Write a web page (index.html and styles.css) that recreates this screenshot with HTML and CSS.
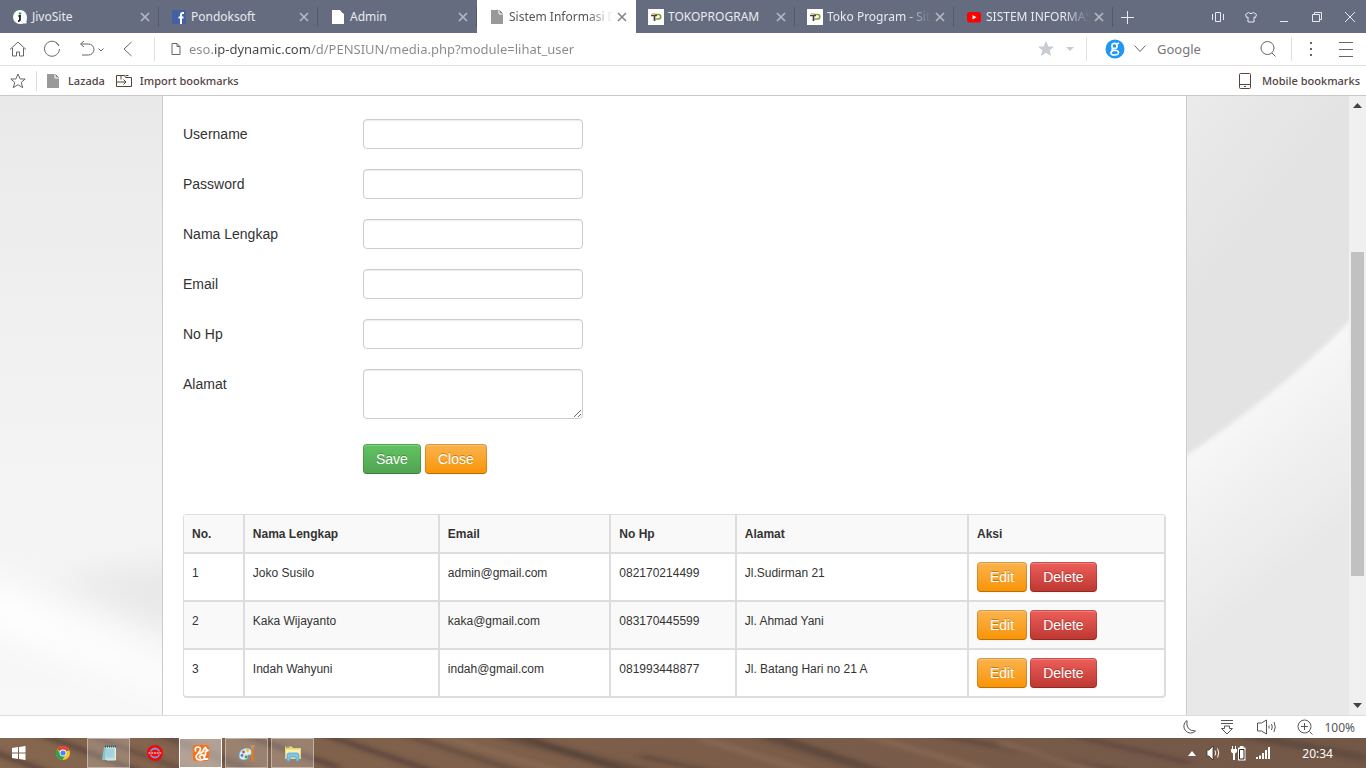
FILE: index.html
```html
<!DOCTYPE html>
<html lang="id">
<head>
<meta charset="utf-8">
<title>Sistem Informasi</title>
<link rel="stylesheet" href="styles.css">
</head>
<body>
<svg class="defs" width="0" height="0" aria-hidden="true">
  <symbol id="x" viewBox="0 0 10 10"><path d="M1 1l8 8M9 1L1 9" stroke="currentColor" stroke-width="1.7" fill="none"/></symbol>
  <symbol id="doc" viewBox="0 0 16 16"><path d="M2 1h8l4 4v10H2z" fill="currentColor"/><path d="M10 1v4h4" fill="none" stroke="#fff" stroke-width="1"/><path d="M10.500 1.500L13.500 4.500" stroke="#777" stroke-width="1"/></symbol>
  <symbol id="toko" viewBox="0 0 16 16"><path fill="#fff" d="M0 0h16v16H0z"/><path d="M7 5.500h3.500a2 2 0 0 1 0 4.500H7.500" stroke="#7fa52e" stroke-width="1.700" fill="none"/><path d="M3 6.500h6M6.500 6v6" stroke="#444" stroke-width="1.700" fill="none"/><path d="M4 4.800h3" stroke="#e8a33b"/></symbol>
</svg>

<header class="tabs">
  <div class="tab"><svg class="ico" viewBox="0 0 16 16"><path d="M8 8h6.500v6.500H8z" fill="#fff"/><circle cx="8" cy="8" r="7" fill="#fff"/><circle cx="8" cy="4.500" r="1.300" fill="#26b35a"/><path d="M6.500 7H8v3.500Q8 12 6 12" fill="none" stroke="#222" stroke-width="1.800"/></svg><span class="name">JivoSite</span><button class="close" aria-label="Tutup"><svg><use href="#x"/></svg></button></div>
  <div class="tab"><svg class="ico" viewBox="0 0 16 16"><path fill="#4460a5" d="M1 1h14v14H1z"/><path d="M13 4h-1.500Q10 4 10 5.500V15M7.500 8.500h5" stroke="#fff" stroke-width="2" fill="none"/></svg><span class="name">Pondoksoft</span><button class="close" aria-label="Tutup"><svg><use href="#x"/></svg></button></div>
  <div class="tab"><svg class="ico white"><use href="#doc"/></svg><span class="name">Admin</span><button class="close" aria-label="Tutup"><svg><use href="#x"/></svg></button></div>
  <div class="tab active"><svg class="ico grey"><use href="#doc"/></svg><span class="name fade">Sistem Informasi D</span><button class="close" aria-label="Tutup"><svg><use href="#x"/></svg></button></div>
  <div class="tab"><svg class="ico"><use href="#toko"/></svg><span class="name">TOKOPROGRAM</span><button class="close" aria-label="Tutup"><svg><use href="#x"/></svg></button></div>
  <div class="tab"><svg class="ico"><use href="#toko"/></svg><span class="name fade">Toko Program - Sit</span><button class="close" aria-label="Tutup"><svg><use href="#x"/></svg></button></div>
  <div class="tab"><svg class="ico" viewBox="0 0 16 16"><rect x="1" y="3" width="14" height="10.500" rx="2.500" fill="#f00"/><path d="M6.500 6v4.500L10.500 8.200z" fill="#fff"/></svg><span class="name fade">SISTEM INFORMAS</span><button class="close" aria-label="Tutup"><svg><use href="#x"/></svg></button></div>
  <button class="plus" aria-label="Tab baru"><svg width="14" height="14" viewBox="0 0 14 14"><path d="M7.500 1v13M1 7.500h13" stroke="currentColor"/></svg></button>
  <div class="win">
    <button aria-label="Panel"><svg viewBox="0 0 14 14"><path d="M4.500 2.500h5v9h-5zM1.500 4v6M12.500 4v6" /></svg></button>
    <button aria-label="Tema"><svg viewBox="0 0 14 14"><path d="M4.500 2.500L1.500 4.500l1 3 1.500-.5v5h6V7l1.500.5 1-3-3-2Q7 5 4.500 2.500z"/></svg></button>
    <button aria-label="Kecilkan"><svg viewBox="0 0 14 14"><path d="M3 11.500h8"/></svg></button>
    <button aria-label="Pulihkan"><svg viewBox="0 0 14 14"><path d="M2.500 4.500h7v7h-7zM4.500 4.500v-2h7v7h-2"/></svg></button>
    <button aria-label="Tutup jendela"><svg viewBox="0 0 14 14"><path d="M2 2l10 10M12 2L2 12"/></svg></button>
  </div>
</header>

<nav class="toolbar">
  <button class="tool w36" aria-label="Beranda"><svg width="18" height="18" viewBox="0 0 18 18"><path d="M1 9.500L9 2l8 7.500M3.500 8v8h4v-4h3v4h4V8"/></svg></button>
  <button class="tool w32" aria-label="Muat ulang"><svg width="18" height="18" viewBox="0 0 18 18"><path d="M15.500 5A7.500 7.500 0 1 0 16.500 9M13 2.500A7.500 7.500 0 0 1 16 6"/></svg></button>
  <button class="tool w48" aria-label="Urungkan"><svg width="28" height="18" viewBox="0 0 28 18"><path d="M3 4h7.500a5.500 5.500 0 0 1 0 11H4M6 1L2.500 4 6 7"/><path d="M20.500 8.500l2.500 2.500 2.500-2.500" /></svg></button>
  <button class="tool w24" aria-label="Kembali"><svg width="14" height="18" viewBox="0 0 14 18"><path d="M10.500 2L3 9l7.500 7"/></svg></button>
  <i class="rule first"></i>
  <label class="address"><svg width="10" height="12" viewBox="0 0 10 12"><path d="M1 .5h5l3 3v8H1zM6 .5v3h3"/></svg><input type="text" aria-label="Alamat situs" value="eso.ip-dynamic.com/d/PENSIUN/media.php?module=lihat_user"></label>
  <button class="tool w24 pale" aria-label="Favorit"><svg width="16" height="16" viewBox="0 0 16 16"><path d="M8 1l2 5h5l-4 3.200 1.500 5L8 11.200 3.500 14.200l1.500-5L1 6h5z" fill="currentColor"/></svg></button>
  <button class="tool w24 pale" aria-label="Pilihan favorit"><svg width="10" height="6" viewBox="0 0 10 6"><path d="M1 1h8L5 5z" fill="currentColor" stroke="none"/></svg></button>
  <i class="rule"></i>
  <label class="search">
    <svg width="20" height="20" viewBox="0 0 20 20"><circle cx="10" cy="10" r="9.500" fill="#2196f3" stroke="none"/><g stroke="#fff" stroke-width="1.600"><circle cx="9.500" cy="7" r="2.600"/><path d="M12 5l2-1M7.500 9.500Q6 11 9 11.300q4.500 0 4.500 2.200 0 2.500-4 2.500t-3.500-2.200q0-1.800 3-2.500"/></g></svg>
    <svg width="14" height="10" viewBox="0 0 14 10"><path d="M1.500 1.500L7 7.500l5.500-6"/></svg>
    <input type="text" aria-label="Cari" placeholder="Google">
    <svg width="18" height="18" viewBox="0 0 18 18"><circle cx="8.500" cy="8" r="6.500"/><path d="M13 13l3.500 3.500"/></svg>
  </label>
  <i class="rule"></i>
  <button class="tool w38" aria-label="Lainnya"><svg width="4" height="16" viewBox="0 0 4 16"><path d="M1 1h2v2H1zM1 7h2v2H1zM1 13h2v2H1z" fill="currentColor" stroke="none"/></svg></button>
  <button class="tool w32" aria-label="Menu"><svg width="16" height="16" viewBox="0 0 16 16"><path d="M1 1.500h14M1 8.500h14M1 15.500h14"/></svg></button>
</nav>

<nav class="bookmarks">
  <button class="tool w36" aria-label="Tambah bookmark"><svg width="18" height="18" viewBox="0 0 18 18"><path d="M9 2l2.200 5h5l-4 3.500 1.500 5.200L9 12.700l-4.700 3 1.500-5.200L1.800 7h5z"/></svg></button>
  <i class="short"></i>
  <a href="#"><svg class="ico grey"><use href="#doc"/></svg>Lazada</a>
  <a href="#"><svg width="18" height="14" viewBox="0 0 18 14"><path d="M6 5.500V1.500H1.500v11h15v-9h-6l-1-2H6M10.500 1.500h3M1.500 8H11M8.500 5.500L11 8l-2.500 2.500"/></svg>Import bookmarks</a>
  <a href="#" class="right"><svg width="14" height="18" viewBox="0 0 14 18"><rect x="1.500" y="1.500" width="11" height="15" rx="1"/><path d="M1.500 12.500h11M6 14.500h2"/></svg>Mobile bookmarks</a>
</nav>

<div class="viewport">
  <div class="page">
    <svg class="backdrop" viewBox="0 0 1349 619" preserveAspectRatio="none" aria-hidden="true">
      <defs>
        <linearGradient id="l" x1="0" y1="0" x2="0" y2="1"><stop offset="0" stop-color="#e9e9e9"/><stop offset=".35" stop-color="#f0f0f0"/><stop offset=".75" stop-color="#f5f5f5"/><stop offset="1" stop-color="#f8f8f8"/></linearGradient>
        <linearGradient id="r" gradientUnits="userSpaceOnUse" x1="1187" y1="0" x2="1290" y2="80"><stop offset="0" stop-color="#ebebeb"/><stop offset="1" stop-color="#e3e3e3"/></linearGradient>
        <linearGradient id="s" gradientUnits="userSpaceOnUse" x1="1230" y1="320" x2="1330" y2="440"><stop offset="0" stop-color="#f7f7f7"/><stop offset="1" stop-color="#e8e8e8"/></linearGradient>
        <filter id="b" x="-30%" y="-60%" width="160%" height="220%"><feGaussianBlur stdDeviation="16"/></filter>
        <filter id="e"><feGaussianBlur stdDeviation="2"/></filter>
      </defs>
      <path d="M0 0h675v619H0z" fill="url(#l)"/>
      <path d="M50 480L220 460V560z" fill="#e8e8e8" filter="url(#b)"/>
      <path d="M-20 480L200 590v15L-20 530z" fill="#fff" filter="url(#b)"/>
      <path d="M675 0h674v619H675z" fill="url(#r)"/>
      <path d="M1150 384L1187 359Q1290 290 1370 204V650H1150z" fill="url(#s)" filter="url(#e)"/>
    </svg>
    <main class="container">
      <form>
        <div class="field"><label for="u">Username</label><input id="u" type="text"></div>
        <div class="field"><label for="p">Password</label><input id="p" type="password"></div>
        <div class="field"><label for="n">Nama Lengkap</label><input id="n" type="text"></div>
        <div class="field"><label for="e1">Email</label><input id="e1" type="text"></div>
        <div class="field"><label for="h">No Hp</label><input id="h" type="text"></div>
        <div class="field"><label for="a">Alamat</label><textarea id="a"></textarea></div>
        <div class="actions"><button type="button" class="btn green">Save</button><button type="button" class="btn orange">Close</button></div>
      </form>
      <table>
        <colgroup><col class="c1"><col class="c2"><col class="c3"><col class="c4"><col class="c5"><col class="c6"></colgroup>
        <thead><tr><th>No.</th><th>Nama Lengkap</th><th>Email</th><th>No Hp</th><th>Alamat</th><th>Aksi</th></tr></thead>
        <tbody>
          <tr><td>1</td><td>Joko Susilo</td><td>admin@gmail.com</td><td>082170214499</td><td>Jl.Sudirman 21</td><td><div class="pair"><button class="btn orange">Edit</button><button class="btn red">Delete</button></div></td></tr>
          <tr><td>2</td><td>Kaka Wijayanto</td><td>kaka@gmail.com</td><td>083170445599</td><td>Jl. Ahmad Yani</td><td><div class="pair"><button class="btn orange">Edit</button><button class="btn red">Delete</button></div></td></tr>
          <tr><td>3</td><td>Indah Wahyuni</td><td>indah@gmail.com</td><td>081993448877</td><td>Jl. Batang Hari no 21 A</td><td><div class="pair"><button class="btn orange">Edit</button><button class="btn red">Delete</button></div></td></tr>
        </tbody>
      </table>
    </main>
  </div>
  <div class="scroll">
    <svg width="9" height="5" viewBox="0 0 9 5"><path d="M0 5h9L4.500 0z"/></svg>
    <div class="track"><div class="thumb"></div></div>
    <svg width="9" height="5" viewBox="0 0 9 5"><path d="M0 0h9L4.500 5z"/></svg>
  </div>
</div>

<div class="status">
  <button aria-label="Mode malam"><svg viewBox="0 0 18 18"><path d="M7 2.500a6.800 6.800 0 1 0 8.500 10.500Q5.500 13 7 2.500z"/></svg></button>
  <button aria-label="Unduhan"><svg viewBox="0 0 18 18"><path d="M3 2.500h12M3 5.500h12M6.500 8v2.500H3.500L9 16l5.500-5.500h-3V8z"/></svg></button>
  <button aria-label="Suara"><svg class="wide" viewBox="0 0 20 18"><path d="M1.500 5v8h4l5 3V2l-5 3zM13 7.500v3M15.500 6q1.500 3 0 6M18 4q2.500 5 0 10"/></svg></button>
  <button aria-label="Perbesar"><svg viewBox="0 0 18 18"><circle cx="8.500" cy="8.500" r="6.500"/><path d="M5 8.500h7M8.500 5v7M13.500 13.500l3 3"/></svg></button>
  <span>100%</span>
</div>

<footer class="taskbar">
  <svg class="backdrop" viewBox="0 0 1366 30" preserveAspectRatio="none" aria-hidden="true">
    <defs><filter id="w" x="-5%" y="-50%" width="110%" height="200%"><feGaussianBlur stdDeviation="4 2"/></filter>
    <linearGradient id="wood"><stop offset="0" stop-color="#85664f"/><stop offset=".5" stop-color="#7b5d49"/><stop offset="1" stop-color="#735848"/></linearGradient></defs>
    <path d="M0 0h1366v30H0z" fill="url(#wood)"/>
    <g filter="url(#w)" fill="none" stroke="#4c3b34" stroke-opacity=".75">
      <path stroke-width="5" d="M-30 5L50 35M30 -8L140 34M320 -5L440 36M520 -3Q560 12 640 38M230 -8L340 30"/>
      <path stroke-width="3" d="M80 -6L190 34M390 -8L520 34M640 18L740 40M770 -4L890 36M930 -5L1130 35M1050 -8L1190 25"/>
      <path stroke-width="8" stroke-opacity=".45" d="M150 -8L260 36M500 -3L690 45M760 -3L870 32M1240 -4L1366 20"/>
      <path stroke="#93725a" stroke-width="5" stroke-opacity=".6" d="M430 -5L560 34M700 0L810 34M860 -5L990 34M1000 5L1100 34"/>
    </g>
  </svg>
  <button class="app" aria-label="Mulai"><svg width="16" height="16" viewBox="0 0 16 16"><path fill="#fff" d="M1 3l6-1v5.500H1zM8 2l6.500-1v6.500H8zM1 8.500h6V14l-6-1zM8 8.500h6.500V15L8 14z"/></svg></button>
  <button class="app" aria-label="Chrome"><svg width="16" height="16" viewBox="0 0 16 16"><circle cx="8" cy="8" r="7" fill="#f6c52f"/><path d="M8 8L2 4.300A7 7 0 0 1 14.500 5z" fill="#dc4a3d"/><path d="M8 8H4.800L2 4.300A7 7 0 0 0 7.500 15L10.500 9.500z" fill="#2ba24c"/><circle cx="8" cy="8" r="3.400" fill="#fff"/><circle cx="8" cy="8" r="2.600" fill="#4586f3"/></svg></button>
  <button class="app open" aria-label="Notepad"><svg width="18" height="18" viewBox="0 0 18 18"><path d="M4 3h12l-1 13H2z" fill="#8ac4d0"/><path d="M6 3h10v13H5z" fill="#b5dfe7"/><path d="M15.500 4v12H7" fill="none" stroke="#f1eec9"/><path d="M6 6h8M6 8h8M5.500 10h8M5.500 12h8" stroke="#78b5c2" stroke-width=".6"/><path d="M5 2.500h11" stroke="#385965" stroke-width="2" stroke-dasharray="1 1"/></svg></button>
  <button class="app" aria-label="SMI"><svg width="18" height="18" viewBox="0 0 18 18"><circle cx="9" cy="9" r="8" fill="#f20808"/><circle cx="9" cy="9" r="4.500" fill="none" stroke="#6e9fd8" stroke-width="1.800"/><path d="M2 7.500h14v3H2z" fill="#f20808"/><path d="M2.500 9h13" stroke="#ffb0b0" stroke-width="1.600" stroke-dasharray="2 .7"/></svg></button>
  <button class="app current" aria-label="UC Browser"><svg width="18" height="18" viewBox="0 0 18 18"><rect x="1" y="1" width="16" height="16" rx="2.500" fill="#fa7113"/><g fill="none" stroke="#fff" stroke-linecap="round" stroke-linejoin="round"><path d="M3.500 7Q2.500 3 6 3q3.500.5 2 3.500T4 12q0 4 4.500 4t4-3.500Q11 10 8.500 11.500t0 2.500" stroke-width="1.700"/><path d="M8 9.500Q11 8.500 12 5l1.500-1.500L14 5l2 1.500-2.500 1Q14 11 12 12.500M12.500 15h3" stroke-width="1.800"/></g></svg></button>
  <button class="app open" aria-label="Paint"><svg width="18" height="18" viewBox="0 0 18 18"><path d="M1 12Q1 5 8 4q6 0 6 5-1 3-3 2-2 0-1 2 0 3-4 3-5 0-5-4z" fill="#d7eef8" stroke="#6a9bb8" stroke-width=".7"/><circle cx="5.500" cy="8" r="1.400" fill="#e74f2d"/><circle cx="9.500" cy="6.500" r="1.400" fill="#f4bf20"/><circle cx="4" cy="11.500" r="1.400" fill="#3d86d9"/><circle cx="8" cy="13" r="1.400" fill="#45a545"/><path d="M14.500 5.500V17" stroke="#e77c18" stroke-width="2.200"/><path d="M12 1h5l-1.500 4.500h-2z" fill="#c98d60"/></svg></button>
  <button class="app open" aria-label="Explorer"><svg width="18" height="18" viewBox="0 0 18 18"><path d="M1 4V2.500h7l1 1.500h8v11H1z" fill="#ead67b"/><path d="M2 5.500h14V14H2z" fill="#fbf0ac"/><path d="M3 17v-6q0-2 2-2h8q2 0 2 2v6h-3v-4H6v4z" fill="#7fc4ea" stroke="#4b9fce" stroke-width=".7"/><path d="M2 3.200h3" stroke="#35a44a"/></svg></button>
  <div class="tray">
    <svg width="8" height="5" viewBox="0 0 8 5"><path d="M0 5h8L4 0z" fill="#fff"/></svg>
    <svg width="16" height="16" viewBox="0 0 16 16"><path d="M2 5v6h2l4 4V1L4 5z" fill="#fff" stroke="#2d2420" stroke-width=".7"/><path d="M10 5.500q1.500 2.500 0 5M12.500 3.500q2.500 4.500 0 9" fill="none" stroke="#fff"/></svg>
    <svg width="16" height="16" viewBox="0 0 16 16"><path d="M2.500 1v4M5.500 1v4" stroke="#fff"/><path d="M1 4h6v3L5 8.500V15H3V8.500L1 7z" fill="#fff"/><path d="M8 2.500h7.500v13H8z" fill="#fff"/><path d="M10 1h3.500v2H10z" fill="#fff"/><path d="M9.500 4.500h4.500v9.500H9.500z" fill="#fff" stroke="#2d2420"/></svg>
    <svg width="16" height="16" viewBox="0 0 16 16"><path d="M1 12h2v2H1zM4 10.500h2V14H4zM7 8h2v6H7zM10 5h2v9h-2zM13 2h2v12h-2z" fill="#fff"/></svg>
    <time>20:34</time>
  </div>
</footer>
</body>
</html>
```
FILE: styles.css
```css
* { box-sizing: border-box; }
body {
  margin: 0;
  min-height: 100vh;
  display: flex;
  flex-direction: column;
  font-family: "Noto Sans", "Open Sans", sans-serif;
  font-size: 12px;
  color: #333;
  background: #fff;
}
button { border: 0; padding: 0; background: none; color: inherit; font: inherit; }
input, textarea { font: inherit; color: inherit; }
.defs { position: absolute; }
.ico { width: 16px; height: 16px; flex: none; }
.white { color: #fff; }
.grey { color: #999; }

.tabs { display: flex; height: 33px; background: #666c7f; color: #e8eaf0; }
.tab {
  display: flex;
  align-items: center;
  flex: 0 1 159px;
  min-width: 0;
  gap: 4px;
  padding: 0 9px 0 12px;
  background: linear-gradient(#555a6b, #555a6b) right 7px / 1px 20px no-repeat;
}
.tab.active { background: #fff; color: #555; }
.name { flex: 1; min-width: 0; white-space: nowrap; }
.fade { mask-image: linear-gradient(90deg, #000 75%, transparent); }
.close { display: flex; color: #b5b8c2; }
.close svg { width: 10px; height: 10px; }
.active .close { color: #888; }
.plus { display: flex; align-items: center; justify-content: center; width: 28px; }
.win { display: flex; margin-left: auto; }
.win button { display: flex; align-items: center; justify-content: center; width: 33px; }
.win svg { width: 14px; height: 14px; fill: none; stroke: currentColor; }

.toolbar { display: flex; align-items: center; height: 33px; padding-right: 4px; border-bottom: 1px solid #e3e3e3; color: #666; }
.toolbar svg, .bookmarks svg:not(.ico) { fill: none; stroke: currentColor; flex: none; }
.tool { display: flex; align-items: center; justify-content: center; flex: none; }
.w24 { width: 24px; }
.w32 { width: 32px; }
.w36 { width: 36px; }
.w38 { width: 38px; }
.w48 { width: 48px; }
.pale { color: #c8cad4; }
.rule { width: 1px; height: 24px; background: #e0e1e6; flex: none; }
.rule.first { margin-left: 14px; }
.address { display: flex; align-items: center; gap: 8px; flex: 1; padding-left: 16px; }
.address input {
  flex: 1;
  min-width: 0;
  border: 0;
  padding: 0;
  font-size: 13px;
  color: #888;
  -webkit-text-fill-color: transparent;
  background: linear-gradient(90deg, #888 25px, #444 25px, #444 122px, #888 122px);
  -webkit-background-clip: text;
  background-clip: text;
}
.pale + .rule { margin-left: 4px; }
.search { display: flex; align-items: center; gap: 8px; width: 204px; padding: 0 14px 0 18px; }
.search input { flex: 1; min-width: 0; border: 0; padding: 0 0 0 2px; font-size: 13px; }
.search input::placeholder { color: #777; opacity: 1; }

.bookmarks { display: flex; align-items: center; height: 30px; border-bottom: 1px solid #c9c9c9; font-size: 11px; font-weight: 500; }
.bookmarks .tool { color: #666; }
.bookmarks a { display: flex; align-items: center; gap: 7px; margin-left: 10px; color: #54443f; text-decoration: none; }
.bookmarks .right { margin-left: auto; padding-right: 6px; gap: 10px; }
.short { width: 1px; height: 20px; background: #ddd; margin-right: -2px; }

.viewport { display: flex; flex: 1; }
.page { position: relative; flex: 1; display: flex; justify-content: center; min-width: 0; }
.backdrop { position: absolute; inset: 0; width: 100%; height: 100%; }
.container {
  position: relative;
  width: 100%;
  max-width: 1025px;
  padding: 23px 20px 17px;
  border: solid #ccc;
  border-width: 0 1px;
  background: #fff;
  font-family: "Liberation Sans", Arial, sans-serif;
  font-size: 14px;
}
.field { display: flex; align-items: flex-start; margin-bottom: 20px; }
.field label { width: 180px; line-height: 20px; padding-top: 5px; }
.field input, .field textarea {
  width: 220px;
  height: 30px;
  padding: 4px 6px;
  border: 1px solid #ccc;
  border-radius: 4px;
  box-shadow: inset 0 1px 1px rgba(0, 0, 0, .075);
}
.field textarea { display: block; height: 50px; resize: vertical; }
.actions { display: flex; gap: 4px; margin-top: 25px; padding-left: 180px; }
.btn {
  height: 30px;
  padding: 0 12px;
  border: 1px solid rgba(0, 0, 0, .15);
  border-bottom-color: rgba(0, 0, 0, .25);
  border-radius: 4px;
  color: #fff;
  font-family: inherit;
  font-size: 14px;
  text-shadow: 0 -1px 0 rgba(0, 0, 0, .25);
  box-shadow: inset 0 1px 0 rgba(255, 255, 255, .2), 0 1px 2px rgba(0, 0, 0, .05);
  background-origin: border-box;
}
.green { background-image: linear-gradient(#62c462, #51a351); }
.orange { background-image: linear-gradient(#fbb450, #f89406); }
.red { background-image: linear-gradient(#ee5f5b, #bd362f); }

table {
  width: 100%;
  margin-top: 40px;
  table-layout: fixed;
  border-collapse: separate;
  border-spacing: 0;
  border: solid #ddd;
  border-width: 1px 2px 2px 1px;
  border-radius: 4px;
  font-size: 12px;
}
th, td { padding: 8px; line-height: 22px; text-align: left; vertical-align: top; }
th { padding-bottom: 7px; }
th + th, td + td { border-left: 2px solid #ddd; }
td { border-top: 2px solid #ddd; }
th, tbody tr:nth-child(even) td { background: #f9f9f9; }
.c1 { width: 6%; }
.c2 { width: 19.9%; }
.c3 { width: 17.5%; }
.c4 { width: 12.8%; }
.c5 { width: 23.7%; }
.c6 { width: 20.1%; }
.pair { display: flex; gap: 3px; }

.scroll { display: flex; flex-direction: column; align-items: center; width: 17px; padding: 7px 0; background: #f0f0f0; }
.scroll svg { fill: #444; }
.track { flex: 1; width: 13px; display: flex; flex-direction: column; padding: 144px 0 127px; }
.thumb { flex: 1; background: #c1c1c1; }

.status { display: flex; align-items: center; justify-content: flex-end; gap: 20px; height: 23px; padding-right: 11px; border-top: 1px solid #ddd; color: #555; }
.status button { display: flex; }
.status svg { width: 18px; height: 18px; fill: none; stroke: currentColor; }
.status .wide { width: 20px; }
.status span { margin-left: -10px; }

.taskbar { position: relative; display: flex; align-items: center; height: 30px; gap: 3px; overflow: hidden; color: #fff; }
.app { position: relative; display: flex; align-items: center; justify-content: center; width: 43px; height: 30px; border: 1px solid transparent; }
.app:first-of-type { width: 38px; }
.open { background: rgba(255, 255, 255, .2); border-color: rgba(255, 255, 255, .4); }
.current { background: rgba(255, 255, 255, .4); border-color: #fff; }
.tray { position: relative; display: flex; align-items: center; gap: 9px; margin-left: auto; padding-right: 33px; }
.tray time { margin-left: 22px; }
```
